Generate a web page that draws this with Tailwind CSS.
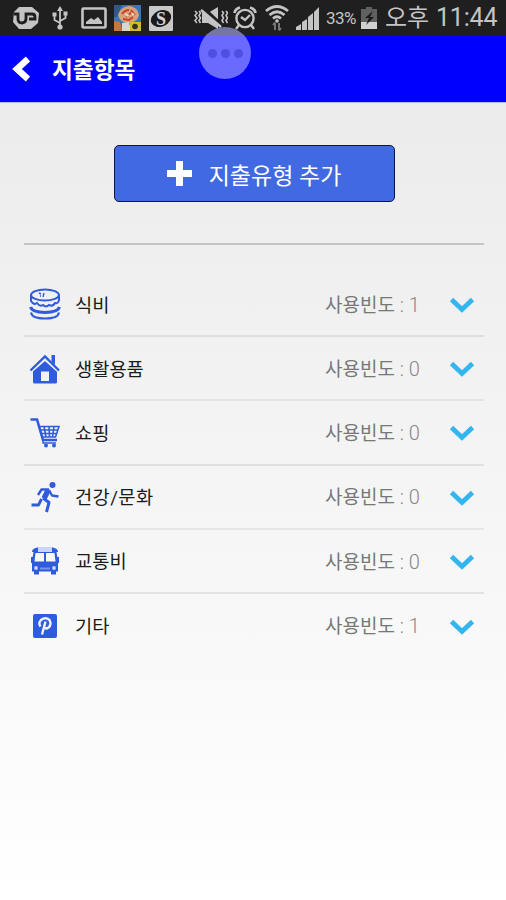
<!DOCTYPE html>
<html lang="ko">
<head>
    <meta charset="UTF-8">
    <meta name="viewport" content="width=device-width, initial-scale=1.0">
    <title>지출항목</title>
    <script src="https://cdn.jsdelivr.net/npm/@tailwindcss/browser@4"></script>
    <style>
        body {
            font-family: Roboto, 'Noto Sans CJK KR', sans-serif;
        }
    </style>
</head>
<body class="w-[506px] h-[900px] overflow-hidden bg-linear-to-b from-[#e9e9e9] to-white">
    <!-- Status bar -->
    <div class="h-9 bg-[#1f1f1f] flex items-center text-[#c4c4c4] whitespace-nowrap">
        <svg class="ml-3 w-7 h-6 shrink-0" viewBox="0 0 28 24">
            <path d="M7 1h13l7 6-1 10-7 6H7l-6-7 1-10z" fill="#c4c4c4"/>
            <path d="M2 8h4v5q0 4 4 4 4-.5 4-4V8h6q3 0 3 3v2h-6" fill="none" stroke="#1f1f1f" stroke-width="2.800"/>
        </svg>
        <svg class="ml-[12px] w-4 h-6 shrink-0" viewBox="0 0 16 24" fill="none" stroke="#c4c4c4" stroke-width="1.800">
            <path d="M8 4v17M8 17l-5.500-3V9M8 15l5.500-3V7"/>
            <path d="M8 0l3 5H5zM.5 6.500h4v4h-4zM11.500 5.500h4v4h-4z" fill="#c4c4c4" stroke="none"/>
            <circle cx="8" cy="21" r="2.600" fill="#c4c4c4" stroke="none"/>
        </svg>
        <svg class="ml-[13px] w-[26px] h-[22px] shrink-0" viewBox="0 0 26 22">
            <rect x="1.500" y="1.500" width="23" height="19" rx="1" fill="none" stroke="#c4c4c4" stroke-width="2.600"/>
            <path d="M5 17v-2l5-4 3 2 4-3 4 5v2z" fill="#c4c4c4"/>
        </svg>
        <svg class="ml-[7px] w-[27px] h-[26px] shrink-0" viewBox="0 0 27 26">
            <rect width="27" height="26" fill="#3478b8"/>
            <path d="M0 0h8L3 12H0z" fill="#31588b"/>
            <path d="M4 10Q6 2 15 1q9 1 10 9-2 8-11 8-8 0-10-8z" fill="#d9a278"/>
            <path d="M8 9q3-4 7-4M12 12l6-5M17 5l4 5M9 14l6 1 4-3" fill="none" stroke="#c4422f" stroke-width="2"/>
            <path d="M10 8l6 2-3 2zM17 7l4 2-3 2z" fill="#efd9bd"/>
            <path d="M0 16l6 1 2 9H0z" fill="#c8763a"/>
            <path d="M8 18l7-1 2 9H8z" fill="#e3d5c6"/>
            <rect x="16" y="17" width="11" height="9" fill="#d5b92f"/>
            <circle cx="21" cy="21.500" r="2.800" fill="#30352b"/>
        </svg>
        <svg class="ml-[8px] w-6 h-[25px] shrink-0" viewBox="0 0 24 25">
            <rect width="24" height="25" rx="1" fill="#c9c9c9"/>
            <ellipse cx="12" cy="12.500" rx="10.500" ry="8" transform="rotate(-25 12 12.500)" fill="#1b1b1b"/>
            <text x="12" y="18.500" text-anchor="middle" font-family="Liberation Serif, serif" font-weight="bold" font-size="18" fill="#d4d4d4">S</text>
        </svg>
        <svg class="ml-[21px] w-[34px] h-[22px] shrink-0" viewBox="0 0 34 22" fill="none" stroke="#c4c4c4" stroke-width="1.600">
            <path d="M1 4l2 2-2 2.500 2 2.500-2 2.500 2 2.500M5 4l1.500 2L5 8.500 6.500 11 5 13.500 6.500 16M28 4l1.500 2L28 8.500l1.500 2.500-1.500 2.500 1.500 2.500M32 4l1.500 2L32 8.500l1.500 2.500-1.500 2.500 1.500 2.500"/>
            <path d="M8 6h6l10-6v22l-10-6H8z" fill="#c4c4c4" stroke="none"/>
            <path d="M9 1l19 18" stroke="#1f1f1f" stroke-width="4"/>
            <path d="M7 3l20 17" stroke-width="2.600"/>
        </svg>
        <svg class="ml-[5px] w-6 h-6 shrink-0" viewBox="0 0 24 24" fill="none" stroke="#c4c4c4" stroke-width="2.400">
            <circle cx="12" cy="12.500" r="8.600"/>
            <path d="M8 11l4 3 5-5M6 19l-3 4M18 19l3 4"/>
            <path d="M1.500 7Q2 3 7 1.500M22.500 7Q22 3 17 1.500" stroke-width="2.800"/>
        </svg>
        <svg class="ml-[8px] w-[24px] h-[26px] shrink-0" viewBox="0 0 24 26" fill="none" stroke="#c4c4c4" stroke-width="2.800">
            <path d="M1 6Q12-3 23 6M4.500 10Q12 3.500 19.500 10M8 13.500q4-3.500 8 0"/>
            <circle cx="12" cy="16" r="1.800" fill="#c4c4c4" stroke="none"/>
            <path d="M10 25v-7M14 18v7M8 20l2-2.500M16 23l-2 2.500" stroke="#777" stroke-width="2"/>
        </svg>
        <svg class="ml-[7px] w-6 h-6 shrink-0" viewBox="0 0 24 24" fill="#c4c4c4">
            <path d="M0 24v-3l5-3v6zM6 24v-8l5-3v11zM12 24V11l5-4v17zM18 24V6l5-5v23z"/>
        </svg>
        <span class="ml-[6px] w-[32px] text-[17px] leading-none tracking-[-0.500px]">33%</span>
        <svg class="ml-[3px] w-4 h-[22px] shrink-0" viewBox="0 0 16 22">
            <path d="M5 0h6v2h5v20H0V2h5z" fill="#606060"/>
            <path d="M0 15h16v7H0z" fill="#d0d0d0"/>
            <path d="M12 4L4 11h4l-3 7 8-8H9z" fill="#1a1a1a"/>
        </svg>
        <span class="ml-[8px] w-[51px] text-[24px] leading-9">오후</span>
        <span class="text-[25px] leading-9 tracking-[-0.200px]">11:44</span>
    </div>

    <!-- Header -->
    <header class="h-[67px] bg-[#0000ff] border-b border-[#b4b4ee] flex items-center">
        <svg class="ml-[12px] w-[18px] h-[26px]" viewBox="0 0 18 26" fill="none" stroke="#fff" stroke-width="6.500">
            <path d="M16 3L5 13l11 10"/>
        </svg>
        <h1 class="ml-[22px] pt-[5px] text-[22.700px] font-bold text-white">지출항목</h1>
    </header>

    <!-- Floating assistant button -->
    <div class="absolute left-[199px] top-[27px] w-[52px] h-[52px] rounded-full bg-[#b0b0ff]/60 flex items-center justify-center gap-1">
        <span class="w-[9px] h-[9px] rounded-full bg-[#4f4fe2]"></span>
        <span class="w-[9px] h-[9px] rounded-full bg-[#4f4fe2]"></span>
        <span class="w-[9px] h-[9px] rounded-full bg-[#4f4fe2]"></span>
    </div>

    <main class="pl-[24px] pr-[22px] pt-[42px]">
        <button class="mx-auto w-[281px] h-[57px] flex items-center justify-center rounded-[5px] border-[1.500px] border-[#0b1647] bg-[#4169e1] text-white">
            <svg class="w-[25px] h-[25px]" viewBox="0 0 25 25" fill="#fff">
                <path d="M9 0h7v9h9v7h-9v9H9v-9H0V9h9z"/>
            </svg>
            <span class="ml-[17px] pt-[7px] text-[23px]">지출유형 추가</span>
        </button>

        <div class="mt-[41px] h-[2px] bg-[#c3c5c5]"></div>

        <ul class="mt-[28px] text-[18.700px] text-[#1c1c1c]">
            <li class="h-[64.200px] flex items-center border-b-2 border-[#dedede]">
                <svg class="ml-[5px] w-8 h-8" viewBox="0 0 32 32" fill="none" stroke="#2f5cdd" stroke-width="2">
                    <ellipse cx="16" cy="7" rx="14" ry="5.500"/>
                    <path d="M2 7v6q3 4.500 6 2 3 4 6 2 3 3 6 0 4 2 6-2 3 1 4-3V7"/>
                    <path d="M1.500 19Q3 24.500 16 24.500T30.500 19" stroke-width="3.200"/>
                    <path d="M2 24.500Q3 30.500 16 30.500t14-6" stroke-width="2"/>
                    <path d="M10 5l2 1M15 5l-1 4M11 8h1" stroke-width="1.400"/>
                </svg>
                <span class="ml-[14px] pt-[3px]">식비</span>
                <span class="ml-auto w-[97px] pt-[2px] text-[19px] text-[#777]">사용빈도<span class="text-[20px] font-light text-[#888]"> : 1</span></span>
                <svg class="ml-[27px] mr-[9px] mt-[2px] w-[26px] h-4" viewBox="0 0 26 16" fill="none" stroke="#33b5f0" stroke-width="4.800"><path d="M2.500 2.500L13 12.500l10.500-10"/></svg>
            </li>
            <li class="h-[64.200px] flex items-center border-b-2 border-[#e4e4e4]">
                <svg class="ml-[5px] mt-[2px] w-8 h-8" viewBox="0 0 32 32" fill="#2f5cdd">
                    <path d="M4 18L16 8l12 10v11q0 1.500-1.500 1.500h-21Q4 30.500 4 29z"/>
                    <path d="M1.500 18L16 5 30 18" fill="none" stroke="#f0f0f0" stroke-width="4"/>
                    <path d="M1.500 17.500L16 3.500l14 14" fill="none" stroke="#2f5cdd" stroke-width="2.400"/>
                    <path d="M22.500 2h3.500v10l-3.500-3.500z"/>
                    <path d="M12 18.500h8V28h-8z" fill="#f2f2f2"/>
                </svg>
                <span class="ml-[14px] pt-[3px]">생활용품</span>
                <span class="ml-auto w-[97px] pt-[2px] text-[19px] text-[#777]">사용빈도<span class="text-[20px] font-light text-[#888]"> : 0</span></span>
                <svg class="ml-[27px] mr-[9px] mt-[2px] w-[26px] h-4" viewBox="0 0 26 16" fill="none" stroke="#33b5f0" stroke-width="4.800"><path d="M2.500 2.500L13 12.500l10.500-10"/></svg>
            </li>
            <li class="h-[64.200px] flex items-center border-b-2 border-[#e0e0e0]">
                <svg class="ml-[5px] mt-[2px] w-8 h-8" viewBox="0 0 32 32" fill="none" stroke="#2f5cdd" stroke-width="2">
                    <path d="M1.500 2.500H8l6 20.500h14" stroke-width="2.600"/>
                    <path d="M9.500 9.500H30l-3.500 10.500H13M11 13h17.500M12 16.500h15.500M15 9.500l2 10.500M20 9.500l.5 10.500M25 9.500l-1.500 10.500" stroke-width="1.600"/>
                    <path d="M14 23v3h13" stroke-width="1.500"/>
                    <circle cx="17" cy="28.500" r="2" fill="#2f5cdd" stroke="none"/>
                    <circle cx="25" cy="28.500" r="2" fill="#2f5cdd" stroke="none"/>
                </svg>
                <span class="ml-[14px] pt-[3px]">쇼핑</span>
                <span class="ml-auto w-[97px] pt-[2px] text-[19px] text-[#777]">사용빈도<span class="text-[20px] font-light text-[#888]"> : 0</span></span>
                <svg class="ml-[27px] mr-[9px] mt-[2px] w-[26px] h-4" viewBox="0 0 26 16" fill="none" stroke="#33b5f0" stroke-width="4.800"><path d="M2.500 2.500L13 12.500l10.500-10"/></svg>
            </li>
            <li class="h-[64.200px] flex items-center border-b-2 border-[#e6e6e6]">
                <svg class="ml-[5px] w-8 h-8" viewBox="0 0 32 32" fill="none" stroke="#2f5cdd" stroke-linejoin="round">
                    <circle cx="23.500" cy="4" r="3" fill="#2f5cdd" stroke="none"/>
                    <path d="M9 14l3.500-5.500 7.500 0" stroke-width="2.400"/>
                    <path d="M19 9.500l-4 8" stroke-width="5.500"/>
                    <path d="M20 9l3 5.500 6.500 1" stroke-width="2.300"/>
                    <path d="M14 17l6 4.500L17.500 31" stroke-width="3"/>
                    <path d="M12.500 18l-3 6H2.500" stroke-width="2.800"/>
                </svg>
                <span class="ml-[14px] pt-[2px] tracking-[0.400px]">건강/문화</span>
                <span class="ml-auto w-[97px] pt-[2px] text-[19px] text-[#777]">사용빈도<span class="text-[20px] font-light text-[#888]"> : 0</span></span>
                <svg class="ml-[27px] mr-[9px] mt-[2px] w-[26px] h-4" viewBox="0 0 26 16" fill="none" stroke="#33b5f0" stroke-width="4.800"><path d="M2.500 2.500L13 12.500l10.500-10"/></svg>
            </li>
            <li class="h-[64.200px] flex items-center border-b-2 border-[#e2e2e2]">
                <svg class="ml-[5px] w-8 h-8" viewBox="0 0 32 32" fill="#2f5cdd">
                    <path d="M8 2h16l3 4v2H5V6z" fill="#c9d5f7"/>
                    <path d="M3 7q0-4 6-4.500V7zM29 7q0-4-6-4.500V7z"/>
                    <path d="M4.500 7h23L29 16v10.500H3V16z"/>
                    <path d="M6.500 8H15v8.500H5.500zM17 8h8.500l1 8.500H17z" fill="#f8f8f8"/>
                    <path d="M2 12h2v6H2zM28 12h2v6h-2zM5 26h5v3.500H5zM22 26h5v3.500h-5z"/>
                    <circle cx="7" cy="23" r="1.900" fill="#cad6f8"/>
                    <circle cx="25" cy="23" r="1.900" fill="#cad6f8"/>
                    <path d="M11 22.500h10v2H11z" fill="#7794e7"/>
                </svg>
                <span class="ml-[14px] pt-[3px]">교통비</span>
                <span class="ml-auto w-[97px] pt-[2px] text-[19px] text-[#777]">사용빈도<span class="text-[20px] font-light text-[#888]"> : 0</span></span>
                <svg class="ml-[27px] mr-[9px] mt-[2px] w-[26px] h-4" viewBox="0 0 26 16" fill="none" stroke="#33b5f0" stroke-width="4.800"><path d="M2.500 2.500L13 12.500l10.500-10"/></svg>
            </li>
            <li class="h-[64.200px] flex items-center">
                <svg class="ml-[5px] w-8 h-8" viewBox="0 0 32 32">
                    <rect x="4" y="4" width="24" height="24" rx="2" fill="#2f5cdd"/>
                    <path d="M11.500 16.500q-2.500-3.500.5-6.500 4.500-3.500 8.500 0 2.500 4.500-1 7.500-2.500 2-4.500-.5M16.500 11.500l-3.500 13" fill="none" stroke="#f2f4fc" stroke-width="2.400"/>
                </svg>
                <span class="ml-[14px] pt-px">기타</span>
                <span class="ml-auto w-[97px] text-[19px] text-[#777]">사용빈도<span class="text-[20px] font-light text-[#888]"> : 1</span></span>
                <svg class="ml-[27px] mr-[9px] mt-px w-[26px] h-4" viewBox="0 0 26 16" fill="none" stroke="#33b5f0" stroke-width="4.800"><path d="M2.500 2.500L13 12.500l10.500-10"/></svg>
            </li>
        </ul>
    </main>
</body>
</html>
